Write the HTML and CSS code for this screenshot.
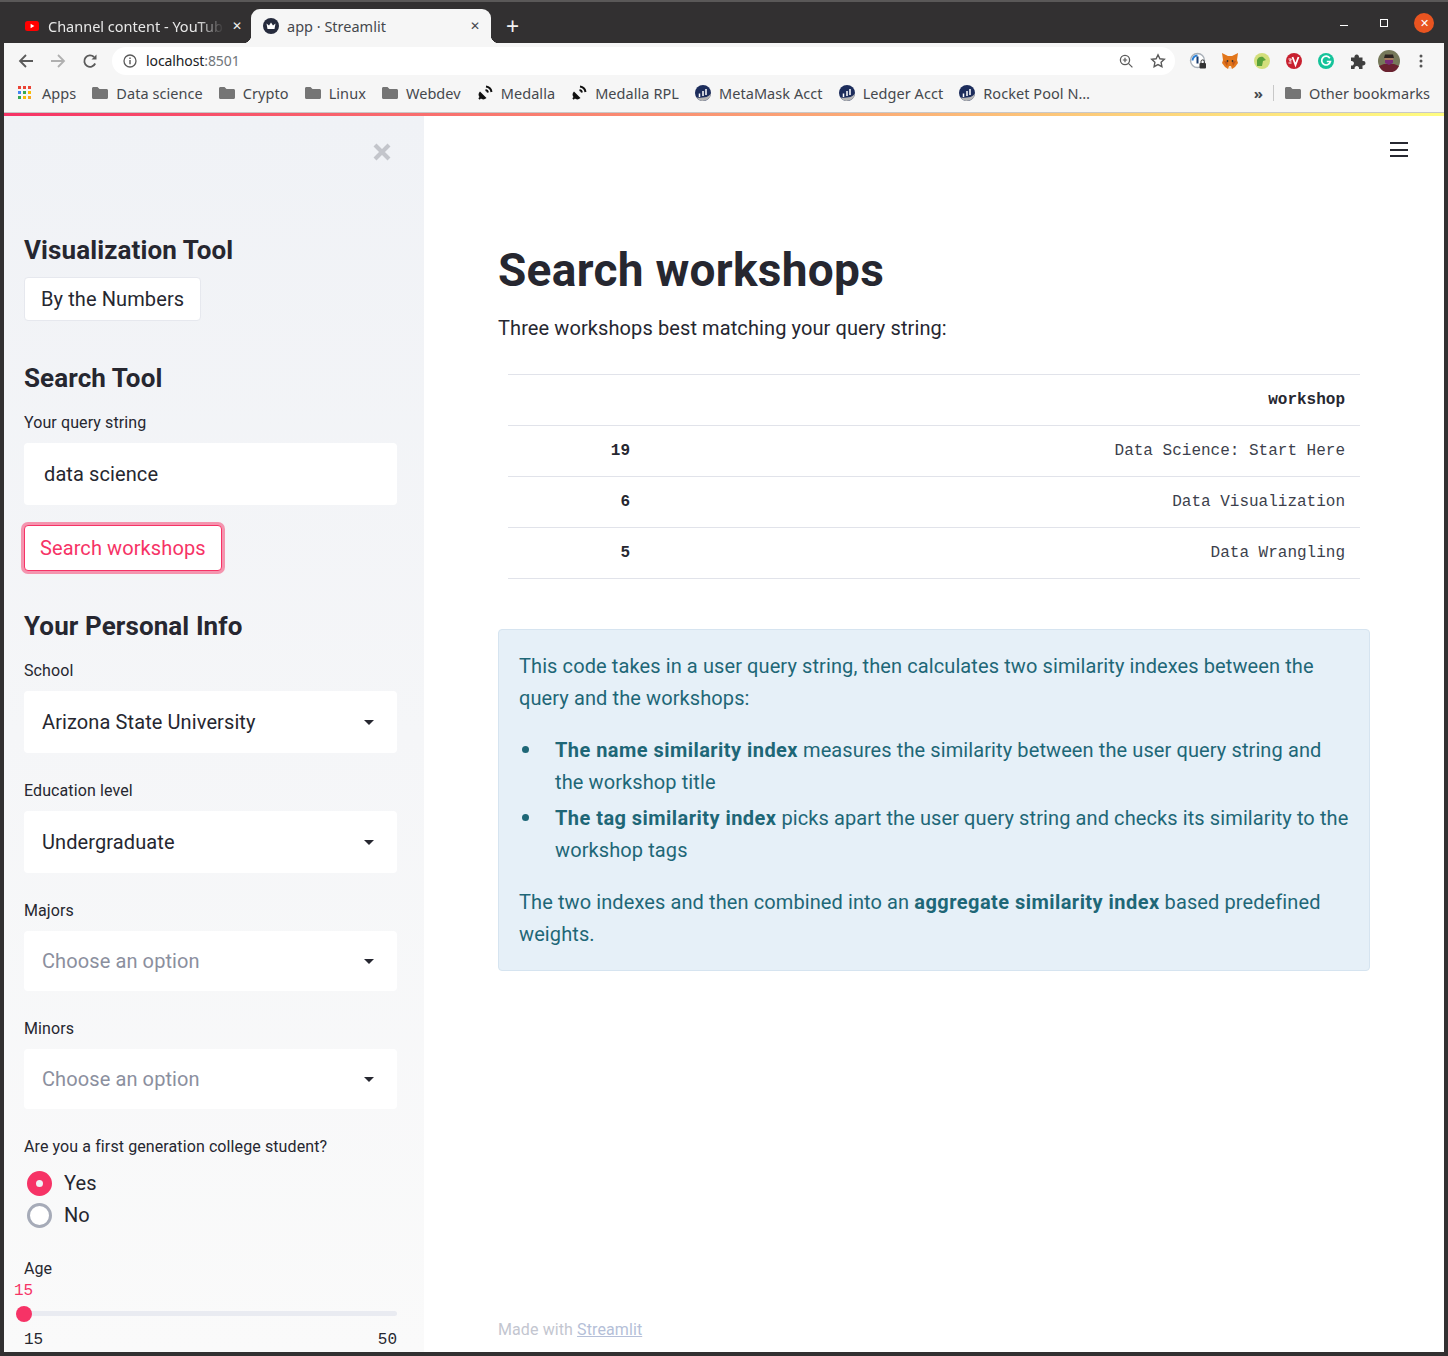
FILE: index.html
```html
<!DOCTYPE html>
<html lang="en">
<head>
  <meta charset="UTF-8">
  <title>app · Streamlit</title>
  <link rel="stylesheet" href="styles.css">
</head>
<body>
  <div class="window">
    <!-- Browser chrome -->
    <div class="tabstrip">
      <div class="tab tab-idle">
        <svg class="fav" viewBox="0 0 14 10" width="14" height="10"><rect width="14" height="10" rx="2.5" fill="#f00"/><path d="M5.6 2.8 9.4 5 5.6 7.2z" fill="#fff"/></svg>
        <span class="tab-title fade">Channel content - YouTub</span>
        <span class="tab-x">✕</span>
      </div>
      <div class="tab tab-active">
        <svg class="fav" viewBox="0 0 16 16" width="16" height="16"><circle cx="8" cy="8" r="8" fill="#262b3d"/><path d="M3.5 5.5 6 7.5 8 4.5l2 3 2.5-2-1 5.5h-7z" fill="#fff"/></svg>
        <span class="tab-title">app · Streamlit</span>
        <span class="tab-x">✕</span>
      </div>
      <span class="new-tab">+</span>
      <div class="win-btns">
        <span class="win-min"></span>
        <span class="win-max"></span>
        <span class="win-close">✕</span>
      </div>
    </div>

    <div class="toolbar">
      <svg class="nav" viewBox="0 0 16 16" width="16" height="16"><path d="M15 8H2M8 2 2 8l6 6" fill="none" stroke="#5a5a5a" stroke-width="1.8"/></svg>
      <svg class="nav" viewBox="0 0 16 16" width="16" height="16"><path d="M1 8h13M8 2l6 6-6 6" fill="none" stroke="#b0b0b0" stroke-width="1.8"/></svg>
      <svg class="nav" viewBox="0 0 16 16" width="16" height="16"><path d="M13.2 10.5A5.7 5.7 0 1 1 12 4" fill="none" stroke="#5a5a5a" stroke-width="1.8"/><path d="M14.5 1.5v5h-5z" fill="#5a5a5a"/></svg>
      <div class="omnibox">
        <svg viewBox="0 0 14 14" width="14" height="14"><circle cx="7" cy="7" r="6" fill="none" stroke="#5a5a5a" stroke-width="1.3"/><path d="M7 6v4.2M7 3.6v1.3" stroke="#5a5a5a" stroke-width="1.4"/></svg>
        <span class="url">localhost<span class="port">:8501</span></span>
        <svg class="omni-zoom" viewBox="0 0 14 14" width="14" height="14"><circle cx="6" cy="6" r="4.6" fill="none" stroke="#5a5a5a" stroke-width="1.3"/><path d="m9.4 9.4 4 4M3.8 6h4.4M6 3.8v4.4" stroke="#5a5a5a" stroke-width="1.2"/></svg>
        <svg class="omni-star" viewBox="0 0 16 16" width="16" height="16"><path d="m8 1.8 1.9 4 4.4.5-3.2 3 .8 4.4L8 11.6l-3.9 2.1.8-4.4-3.2-3 4.4-.5z" fill="none" stroke="#5a5a5a" stroke-width="1.4"/></svg>
      </div>
      <div class="extensions">
        <svg viewBox="0 0 18 18" width="18" height="18"><circle cx="8.5" cy="8.500" r="7" fill="#fff" stroke="#a9b0b8" stroke-width="1.400"/><path d="M3.500 8.500A5 5 0 0 1 8.500 3.500" fill="none" stroke="#2a7fd5" stroke-width="2"/><path d="M8.500 4.500v7" stroke="#16396b" stroke-width="2"/><rect x="10.5" y="11" width="6.5" height="5.5" rx="1" fill="#333"/><path d="M12 11V9.6a1.7 1.7 0 0 1 3.4 0V11" fill="none" stroke="#333"/></svg>
        <svg viewBox="0 0 18 18" width="18" height="18"><path d="M1 1 7 4h4l6-3-1 7 1 3-3 4-3 2H7l-3-2-3-4 1-3z" fill="#e2761b"/><path d="M3 9l4 1-1 4zM15 9l-4 1 1 4z" fill="#c0561a"/><path d="M7 17l1-3h2l1 3z" fill="#f5e6d8"/><circle cx="6.500" cy="9" r=".9" fill="#333"/><circle cx="11.500" cy="9" r=".9" fill="#333"/></svg>
        <svg viewBox="0 0 18 18" width="18" height="18"><circle cx="9" cy="9" r="8" fill="#d3df7c"/><path d="M4 14V8c1-3 4-4 6-3l3 3-3 1-1 5z" fill="#58a23a"/></svg>
        <svg viewBox="0 0 18 18" width="18" height="18"><circle cx="9" cy="9" r="8" fill="#c8202f"/><path d="M7.500 5l3 8 3-8" fill="none" stroke="#fff" stroke-width="1.800"/><path d="M3.500 7h3l-2 2h2M3.500 11h3" fill="none" stroke="#fff"/></svg>
        <svg viewBox="0 0 18 18" width="18" height="18"><circle cx="9" cy="9" r="8" fill="#15c39a"/><path d="M12.800 6.200A4.400 4.400 0 1 0 13.400 9.500H9.800" fill="none" stroke="#fff" stroke-width="1.700"/></svg>
        <svg viewBox="0 0 18 18" width="18" height="18"><path d="M2 5.500h3.500a2.300 2.300 0 1 1 4.400 0H13.500V9a2.300 2.300 0 1 1 0 4.400V17H10a2.300 2.300 0 1 0-4.400 0H2v-3.500a2.300 2.300 0 1 0 0-4.400z" fill="#3f3f3f"/></svg>
        <svg class="avatar" viewBox="0 0 22 22" width="22" height="22"><circle cx="11" cy="11" r="11" fill="#76795a"/><path d="M1 16a11 11 0 0 0 20 0l-5-2H6z" fill="#6a2230"/><circle cx="11" cy="9" r="4.500" fill="#a57a5e"/><path d="M7 4.500h8L16 8H6z" fill="#2b2320"/><path d="M7 10h8v3l-4 2-4-2z" fill="#7a2b78"/></svg>
        <svg class="ext-menu" viewBox="0 0 4 14" width="4" height="14"><circle cx="2" cy="2" r="1.500" fill="#555"/><circle cx="2" cy="7" r="1.500" fill="#555"/><circle cx="2" cy="12" r="1.500" fill="#555"/></svg>
      </div>
    </div>

    <div class="bookmarks">
      <div class="bm bm-apps">
        <svg viewBox="0 0 14 14" width="14" height="14"><rect width="3" height="3" fill="#ea4335"/><rect x="5" width="3" height="3" fill="#ea4335"/><rect x="10" width="3" height="3" fill="#ea4335"/><rect y="5" width="3" height="3" fill="#4285f4"/><rect x="5" y="5" width="3" height="3" fill="#34a853"/><rect x="10" y="5" width="3" height="3" fill="#fbbc05"/><rect y="10" width="3" height="3" fill="#34a853"/><rect x="5" y="10" width="3" height="3" fill="#fbbc05"/><rect x="10" y="10" width="3" height="3" fill="#f5a623"/></svg>
        Apps
      </div>
      <div class="bm"><svg class="folder" viewBox="0 0 16 14" width="16" height="14"><use href="#folder-shape"/></svg>Data science</div>
      <div class="bm"><svg class="folder" viewBox="0 0 16 14" width="16" height="14"><use href="#folder-shape"/></svg>Crypto</div>
      <div class="bm"><svg class="folder" viewBox="0 0 16 14" width="16" height="14"><use href="#folder-shape"/></svg>Linux</div>
      <div class="bm"><svg class="folder" viewBox="0 0 16 14" width="16" height="14"><use href="#folder-shape"/></svg>Webdev</div>
      <div class="bm"><svg viewBox="0 0 16 16" width="16" height="16"><use href="#sat-shape"/></svg>Medalla</div>
      <div class="bm"><svg viewBox="0 0 16 16" width="16" height="16"><use href="#sat-shape"/></svg>Medalla RPL</div>
      <div class="bm"><svg viewBox="0 0 16 16" width="16" height="16"><use href="#rocket-shape"/></svg>MetaMask Acct</div>
      <div class="bm"><svg viewBox="0 0 16 16" width="16" height="16"><use href="#rocket-shape"/></svg>Ledger Acct</div>
      <div class="bm"><svg viewBox="0 0 16 16" width="16" height="16"><use href="#rocket-shape"/></svg>Rocket Pool N…</div>
      <div class="bm-right">
        <span class="bm-more">»</span>
        <span class="bm-sep"></span>
        <div class="bm"><svg class="folder" viewBox="0 0 16 14" width="16" height="14"><use href="#folder-shape"/></svg>Other bookmarks</div>
      </div>
    </div>

    <!-- Shared shapes -->
    <svg class="defs" width="0" height="0">
      <defs>
        <path id="folder-shape" d="M0 2.500C0 1.600.6 1 1.500 1h4l2 2h7c.9 0 1.500.6 1.500 1.500v7c0 .9-.6 1.500-1.500 1.500h-13C.6 13 0 12.400 0 11.500z" fill="#757575"/>
        <g id="sat-shape"><path d="M3 6.500 9.500 13A4.600 4.600 0 0 1 3 6.500z" fill="#111"/><path d="M2 14l3-3" stroke="#111" stroke-width="2"/><path d="M8.500 5a3 3 0 0 1 2.500 2.500M9 1.500A6.500 6.500 0 0 1 14.500 7" fill="none" stroke="#111" stroke-width="2"/></g>
        <g id="rocket-shape"><circle cx="8" cy="8" r="8" fill="#1d2d5c"/><path d="M1.500 12.500A8 8 0 0 0 16 8c-1 3-5 5.500-14.500 4.500z" fill="#b5b5b5"/><path d="M4.500 12V8.500M8 11V6M11 10V4" stroke="#fff" stroke-width="1.500"/></g>
      </defs>
    </svg>

    <!-- Streamlit app -->
    <div class="app">
      <div class="rainbow"></div>
      <div class="app-body">
        <aside class="sidebar">
          <svg class="side-close" viewBox="0 0 18 18" width="18" height="18"><path d="M2 2l14 14M16 2 2 16" stroke="#c3c5cb" stroke-width="4.200"/></svg>

          <h2 class="side-h side-h-first">Visualization Tool</h2>
          <button class="btn">By the Numbers</button>

          <h2 class="side-h side-h-search">Search Tool</h2>
          <label class="field-label">Your query string</label>
          <div class="text-input">data science</div>
          <button class="btn btn-focus">Search workshops</button>

          <h2 class="side-h side-h-info">Your Personal Info</h2>
          <label class="field-label">School</label>
          <div class="select">Arizona State University<span class="caret"></span></div>
          <label class="field-label">Education level</label>
          <div class="select">Undergraduate<span class="caret"></span></div>
          <label class="field-label">Majors</label>
          <div class="select select-multi placeholder">Choose an option<span class="caret"></span></div>
          <label class="field-label">Minors</label>
          <div class="select select-multi placeholder">Choose an option<span class="caret"></span></div>

          <label class="field-label">Are you a first generation college student?</label>
          <div class="radio-group">
            <div class="radio"><span class="dot dot-on"></span>Yes</div>
            <div class="radio"><span class="dot"></span>No</div>
          </div>

          <label class="field-label age-label">Age</label>
          <div class="slider">
            <span class="slider-value">15</span>
            <div class="slider-track"><span class="slider-thumb"></span></div>
            <div class="slider-range"><span>15</span><span>50</span></div>
          </div>
        </aside>

        <main class="main">
          <div class="hamburger"><span></span><span></span><span></span></div>
          <div class="block">
            <h1>Search workshops</h1>
            <p class="lead">Three workshops best matching your query string:</p>
            <table class="results">
              <thead><tr><th></th><th>workshop</th></tr></thead>
              <tbody>
                <tr><th>19</th><td>Data Science: Start Here</td></tr>
                <tr><th>6</th><td>Data Visualization</td></tr>
                <tr><th>5</th><td>Data Wrangling</td></tr>
              </tbody>
            </table>
            <div class="info">
              <p>This code takes in a user query string, then calculates two similarity indexes between the query and the workshops:</p>
              <ul>
                <li><strong>The name similarity index</strong> measures the similarity between the user query string and the workshop title</li>
                <li><strong>The tag similarity index</strong> picks apart the user query string and checks its similarity to the workshop tags</li>
              </ul>
              <p>The two indexes and then combined into an <strong>aggregate similarity index</strong> based predefined weights.</p>
            </div>
          </div>
          <footer class="made">Made with <a href="#">Streamlit</a></footer>
        </main>
      </div>
    </div>
  </div>
</body>
</html>
```

FILE: styles.css
```css
/* Base */
* {
  margin: 0;
  padding: 0;
  box-sizing: border-box;
}

html, body {
  height: 100%;
  overflow: hidden;
}

body {
  background: #333;
  font-family: 'Noto Sans', sans-serif;
}

.window {
  height: 1356px;
  display: flex;
  flex-direction: column;
  background: #323031;
  border-top: 2px solid #5a5858;
  padding: 0 4px 4px;
  position: relative;
}

/* Tab strip */
.tabstrip {
  height: 41px;
  display: flex;
  align-items: flex-end;
  padding-left: 7px;
  flex: none;
}

.tab {
  height: 34px;
  display: flex;
  align-items: center;
  font-size: 14.5px;
  padding-bottom: 1px;
  position: relative;
  flex: none;
}

.tab-idle {
  width: 240px;
  padding-left: 14px;
  color: #e8e8e8;
}

.tab-active {
  width: 240px;
  padding-left: 12px;
  background: #f6f6f6;
  color: #45484d;
  border-radius: 9px 9px 0 0;
}

/* Concave corners at the foot of the active tab */
.tab-active::before, .tab-active::after {
  content: "";
  position: absolute;
  bottom: 0;
  width: 8px;
  height: 8px;
}

.tab-active::before {
  left: -8px;
  background: radial-gradient(circle at 0 0, transparent 8px, #f6f6f6 8.5px);
}

.tab-active::after {
  right: -8px;
  background: radial-gradient(circle at 100% 0, transparent 8px, #f6f6f6 8.5px);
}

.tab-title {
  margin-left: 8px;
  white-space: nowrap;
  overflow: hidden;
  width: 176px;
}

.tab-idle .tab-title { margin-left: 9px; }

.fade {
  -webkit-mask-image: linear-gradient(90deg, #000 85%, transparent);
  mask-image: linear-gradient(90deg, #000 85%, transparent);
}

.tab-x {
  position: absolute;
  right: 11px;
  font-size: 12px;
}

.tab-idle .tab-x { right: 9px; color: #eee; }

.new-tab {
  color: #f2f2f2;
  font-size: 23px;
  line-height: 34px;
  margin-left: 15px;
}

.win-btns {
  margin-left: auto;
  width: 110px;
  height: 40px;
  position: relative;
}

.win-min {
  position: absolute;
  left: 6px;
  top: 22px;
  width: 8px;
  height: 1px;
  background: #fff;
}

.win-max {
  position: absolute;
  left: 46px;
  top: 16px;
  width: 8px;
  height: 8px;
  border: 1px solid #fff;
}

.win-close {
  position: absolute;
  left: 80px;
  top: 10px;
  width: 20px;
  height: 20px;
  border-radius: 50%;
  background: #e95420;
  color: #fff;
  font-size: 11px;
  line-height: 20px;
  text-align: center;
}

/* Toolbar */
.toolbar {
  height: 33px;
  background: #f6f6f6;
  display: flex;
  align-items: center;
  padding: 2px 0 0 14px;
  flex: none;
}

.nav { margin-right: 16px; }

.omnibox {
  width: 1063px;
  height: 28px;
  margin-left: -2px;
  background: #fff;
  border-radius: 14px;
  display: flex;
  align-items: center;
  padding: 0 9px 0 11px;
}

.url {
  margin-left: 9px;
  font-size: 14px;
  letter-spacing: -0.1px;
  color: #202124;
}

.port { color: #70757a; }

.omni-zoom { margin-left: auto; margin-right: 17px; }

.extensions {
  display: flex;
  align-items: center;
  gap: 14px;
  margin-left: 14px;
}

.avatar { margin-left: -3px; }

.ext-menu { margin-left: 5px; }

/* Bookmarks */
.bookmarks {
  height: 37px;
  background: #f6f6f6;
  border-bottom: 1px solid #c8c8c8;
  display: flex;
  align-items: center;
  padding: 0 0 3px 14px;
  gap: 16px;
  font-size: 14.5px;
  letter-spacing: 0.06px;
  color: #45484d;
  flex: none;
}

.bm {
  display: flex;
  align-items: center;
  gap: 8px;
  white-space: nowrap;
}

.bm-apps { gap: 10px; }

.bm-right {
  margin-left: auto;
  display: flex;
  align-items: center;
  padding-right: 14px;
}

.bm-more { font-weight: 700; font-size: 15px; margin-right: 10px; }

.bm-sep {
  width: 1px;
  height: 16px;
  background: #c8c8c8;
  margin-right: 11px;
}

.defs { position: absolute; }

/* App */
.app {
  flex: 1;
  min-height: 0;
  display: flex;
  flex-direction: column;
  background: #fff;
  color: #262730;
  font-family: Roboto, 'Noto Sans', sans-serif;
  letter-spacing: 0.1px;
  overflow: hidden;
}

.rainbow {
  height: 3px;
  flex: none;
  background: linear-gradient(90deg, #f63366, #fffd80);
}

.app-body {
  flex: 1;
  min-height: 0;
  display: flex;
}

/* Sidebar */
.sidebar {
  width: 420px;
  flex: none;
  padding: 0 27px 0 20px;
  background: linear-gradient(180deg, #f0f2f6, #fafafa);
  position: relative;
  overflow: hidden;
}

.side-close {
  position: absolute;
  right: 33px;
  top: 27px;
}

.side-h {
  font-size: 26px;
  line-height: 32px;
  font-weight: 700;
  margin-bottom: 19px;
}

.side-h-first {
  padding-top: 118px;
  margin-bottom: 0;
}

.side-h-search { margin-top: 41px; }
.side-h-info { margin-top: 39px; }

.btn {
  display: block;
  height: 44px;
  padding: 0 16px;
  background: #fff;
  border: 1px solid #e6e8ee;
  border-radius: 4px;
  color: #262730;
  font: inherit;
  letter-spacing: inherit;
  font-size: 20px;
  margin-top: 11px;
}

.btn-focus {
  height: 46px;
  padding: 0 15px;
  margin-top: 20px;
  border-color: #f63366;
  color: #f63366;
  box-shadow: 0 0 0 3px rgba(246, 51, 102, 0.5);
}

.field-label {
  display: block;
  font-size: 16px;
  line-height: 20px;
}

.text-input {
  height: 62px;
  margin-top: 10px;
  padding: 0 20px;
  background: #fff;
  border-radius: 4px;
  font-size: 20px;
  line-height: 62px;
}

.select {
  height: 62px;
  margin: 10px 0 28px;
  padding-left: 18px;
  background: #fff;
  border-radius: 4px;
  font-size: 20px;
  line-height: 62px;
  position: relative;
}

.select-multi { height: 60px; line-height: 60px; }

.placeholder { color: #8b8f9e; }

.caret {
  position: absolute;
  right: 23px;
  top: 50%;
  margin-top: -2px;
  border: 5px solid transparent;
  border-top-color: #262730;
  border-bottom: none;
}

.radio-group { margin-top: 10px; }

.radio {
  height: 32px;
  display: flex;
  align-items: center;
  font-size: 20px;
  padding-left: 3px;
  gap: 12px;
}

.dot {
  width: 25px;
  height: 25px;
  border-radius: 50%;
  border: 3px solid #a6abb8;
  background: #fff;
}

.dot-on {
  border: 9px solid #f63366;
  background: #f0f2f6;
}

.age-label { margin-top: 28px; }

.slider { position: relative; }

.slider-value {
  position: absolute;
  left: -10px;
  top: 2px;
  font-family: 'Liberation Mono', monospace;
  font-size: 16px;
  line-height: 20px;
  letter-spacing: 0;
  color: #f63366;
}

.slider-track {
  position: absolute;
  left: 0;
  right: 0;
  top: 32px;
  height: 5px;
  border-radius: 3px;
  background: #e9ebf1;
}

.slider-thumb {
  position: absolute;
  left: -8px;
  top: -5px;
  width: 16px;
  height: 16px;
  border-radius: 50%;
  background: #f63366;
}

.slider-range {
  position: absolute;
  left: 0;
  right: 0;
  top: 51px;
  display: flex;
  justify-content: space-between;
  font-family: 'Liberation Mono', monospace;
  font-size: 16px;
  line-height: 20px;
  letter-spacing: 0;
}

/* Main column */
.main {
  flex: 1;
  position: relative;
  padding: 0 74px;
}

.hamburger {
  position: absolute;
  right: 36px;
  top: 26px;
  width: 18px;
  display: flex;
  flex-direction: column;
  gap: 4.5px;
}

.hamburger span {
  height: 2px;
  background: #262730;
}

.block { padding-top: 124px; }

h1 {
  font-size: 46px;
  line-height: 60px;
  font-weight: 700;
  letter-spacing: 0.3px;
}

.lead {
  font-size: 20px;
  line-height: 32px;
  margin-top: 12px;
}

/* Table */
.results {
  width: 852px;
  margin: 30px 0 50px 10px;
  border-collapse: collapse;
  font-family: 'Liberation Mono', monospace;
  font-size: 16px;
  letter-spacing: 0;
}

.results tr {
  height: 51px;
  border-top: 1px solid #e1e3ea;
  border-bottom: 1px solid #e1e3ea;
}

.results th, .results td {
  padding: 0 15px;
  text-align: right;
}

.results th { font-weight: 700; }

.results tbody th { width: 137px; }

.results td { color: #3c3f4c; }

/* Info box */
.info {
  width: 872px;
  padding: 20px;
  background: #e6f0f8;
  border: 1px solid #d6e4f0;
  border-radius: 4px;
  color: #1e6777;
  font-size: 20px;
  line-height: 32px;
}

.info strong { letter-spacing: 0.45px; }

.info ul {
  margin: 20px 0;
  padding-left: 36px;
  list-style: none;
}

.info li {
  margin-bottom: 4px;
  position: relative;
}

.info li::before {
  content: "";
  position: absolute;
  left: -33px;
  top: 12px;
  width: 7px;
  height: 7px;
  border-radius: 50%;
  background: #1e6777;
}

.made {
  position: absolute;
  left: 74px;
  top: 1204px;
  font-size: 16px;
  line-height: 20px;
  color: #c3c6d0;
}

.made a { color: #b5bfd8; }
```
